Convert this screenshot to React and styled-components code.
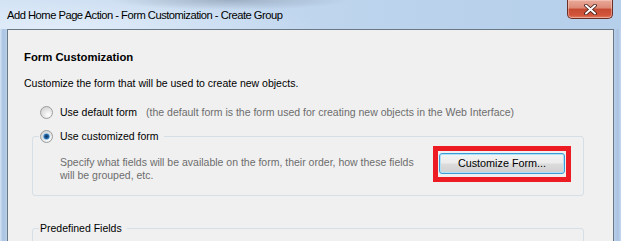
import React from 'react';
import styled, { createGlobalStyle } from 'styled-components';

const Global = createGlobalStyle`
  html, body { margin: 0; padding: 0; }
  body { width: 621px; height: 241px; overflow: hidden; background: #bcd3ec; }
`;

const Window = styled.div`
  width: 621px;
  height: 241px;
  overflow: hidden;
  display: flex;
  flex-direction: column;
  font-family: "Liberation Sans", Arial, sans-serif;
  background:
    radial-gradient(ellipse 120px 10px at 230px 0px, rgba(90,100,115,0.35), rgba(90,100,115,0) 100%),
    radial-gradient(ellipse 260px 40px at 60px 30px, rgba(235,243,252,0.7), rgba(235,243,252,0) 100%),
    linear-gradient(90deg, #cfe0f3 0%, #c3d8ef 35%, #bad2ec 70%, #b6cfea 100%);
`;

const TitleBar = styled.div`
  height: 29px;
  flex: none;
  display: flex;
  align-items: flex-start;
  padding: 0 8px 0 7px;
`;

const TitleText = styled.div`
  margin-top: 8px;
  font-size: 11.2px;
  line-height: 14px;
  letter-spacing: -0.5px;
  color: #000;
  white-space: nowrap;
`;

const CloseButton = styled.div`
  margin-left: auto;
  width: 46px;
  height: 19px;
  box-sizing: border-box;
  border: 1px solid #6b2f28;
  border-top: none;
  border-radius: 0 0 5px 5px;
  background: linear-gradient(180deg, #e9a999 0%, #dc8a76 45%, #c64a32 50%, #d2553b 85%, #e0836a 100%);
  box-shadow: inset 0 0 0 1px rgba(255, 220, 210, 0.45);
  display: flex;
  align-items: center;
  justify-content: center;
`;

const Frame = styled.div`
  flex: 1;
  display: flex;
  padding: 0 7px;
  min-height: 0;
  background: linear-gradient(90deg, #d3e3f4 0px, #a9c3e1 3px, #b9cfe9 7px, #b9cfe9 614px, #a9c3e1 618px, #c4d7ee 621px);
`;

const Client = styled.div`
  flex: 1;
  background: #f0f0f0;
  border: 1px solid #6a7784;
  border-bottom: none;
  padding: 19px 0 0 16px;
  overflow: hidden;
  font-size: 10.5px;
  color: #000;
`;

const Heading = styled.div`
  font-weight: bold;
  font-size: 11.3px;
  line-height: 16px;
`;

const Intro = styled.div`
  margin-top: 10px;
  line-height: 16px;
`;

const RadioRow = styled.label`
  display: flex;
  align-items: center;
  gap: 7px;
  height: 16px;
  line-height: 16px;
  white-space: nowrap;
  padding-left: ${p => (p.$indent ? 16 : 0)}px;
  margin-top: ${p => p.$top || 0}px;
`;

const Hint = styled.span`
  color: #6d6d6d;
  margin-left: 9px;
`;

const Group = styled.fieldset`
  box-sizing: border-box;
  width: 552px;
  margin: ${p => p.$top}px 0 0 8px;
  padding: 0;
  border: 1px solid #d5dfe5;
  border-radius: 3px;
  min-width: 0;
`;

const Legend = styled.legend`
  margin-left: 6px;
  padding: 0 5px 0 1px;
  height: 16px;
  line-height: 16px;
`;

const GroupBody = styled.div`
  display: flex;
  align-items: flex-start;
  padding: 2px 12px 13px 27px;
`;

const Description = styled.div`
  margin-top: 10px;
  line-height: 13px;
  color: #6d6d6d;
  white-space: nowrap;
`;

const Highlight = styled.div`
  margin-left: auto;
  border: 5px solid #ed1c24;
  padding: 2px 1px 3px 1px;
  background: #f0f0f0;
`;

const Button = styled.button`
  display: block;
  width: 126px;
  height: 21px;
  margin: 0;
  padding: 0 0 1px;
  box-sizing: border-box;
  border: 1px solid #3c9ad6;
  border-radius: 3px;
  font-family: "Liberation Sans", Arial, sans-serif;
  font-size: 10.8px;
  color: #000;
  background: linear-gradient(180deg, #f4f4f4 0%, #ececec 48%, #dcdcdc 52%, #d0d0d0 100%);
  box-shadow: inset 0 0 0 1px #aee2f8;
`;

function Radio({ checked }) {
  return (
    <svg width="13" height="13" viewBox="0 0 13 13" style={{ flex: 'none' }}>
      <defs>
        <radialGradient id="rbg" cx="0.65" cy="0.7" r="0.7">
          <stop offset="0" stopColor="#ffffff" />
          <stop offset="1" stopColor="#d4d4d4" />
        </radialGradient>
        <radialGradient id="rdot" cx="0.5" cy="0.5" r="0.55">
          <stop offset="0" stopColor="#10305a" />
          <stop offset="0.55" stopColor="#1f5fa0" />
          <stop offset="1" stopColor="#8fd0f4" />
        </radialGradient>
      </defs>
      <circle cx="6.5" cy="6.5" r="6" fill="url(#rbg)" stroke="#9a9d9f" strokeWidth="1" />
      {checked && <circle cx="6.5" cy="6.5" r="3.3" fill="url(#rdot)" />}
    </svg>
  );
}

function CloseGlyph() {
  return (
    <svg width="13" height="11" viewBox="0 0 13 11">
      <path d="M2 1.5 L11 9.5 M11 1.5 L2 9.5" stroke="#3a1410" strokeWidth="3.6" strokeLinecap="round" />
      <path d="M2 1.5 L11 9.5 M11 1.5 L2 9.5" stroke="#ffffff" strokeWidth="2" strokeLinecap="round" />
    </svg>
  );
}

export default function App() {
  return (
    <>
      <Global />
      <Window>
        <TitleBar>
          <TitleText>Add Home Page Action - Form Customization - Create Group</TitleText>
          <CloseButton>
            <CloseGlyph />
          </CloseButton>
        </TitleBar>
        <Frame>
          <Client>
            <Heading>Form Customization</Heading>
            <Intro>Customize the form that will be used to create new objects.</Intro>
            <RadioRow $indent $top={13}>
              <Radio />
              <span>
                Use default form
                <Hint>(the default form is the form used for creating new objects in the Web Interface)</Hint>
              </span>
            </RadioRow>
            <Group $top={8}>
              <Legend>
                <RadioRow>
                  <Radio checked />
                  <span>Use customized form</span>
                </RadioRow>
              </Legend>
              <GroupBody>
                <Description>
                  Specify what fields will be available on the form, their order, how these fields
                  <br />
                  will be grouped, etc.
                </Description>
                <Highlight>
                  <Button>Customize Form...</Button>
                </Highlight>
              </GroupBody>
            </Group>
            <Group $top={24}>
              <Legend>Predefined Fields</Legend>
              <GroupBody />
            </Group>
          </Client>
        </Frame>
      </Window>
    </>
  );
}
